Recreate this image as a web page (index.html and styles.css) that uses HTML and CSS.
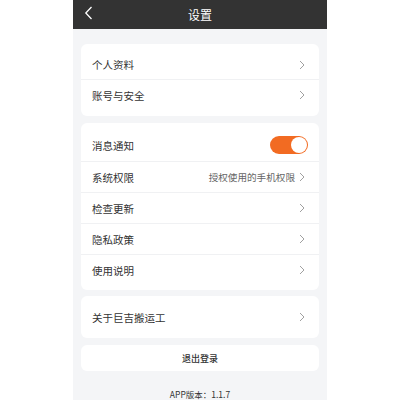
FILE: index.html
```html
<!DOCTYPE html>
<html lang="zh-CN">
<head>
<meta charset="utf-8">
<link rel="stylesheet" href="styles.css">
</head>
<body>
<div class="phone">
  <div class="header">
    <svg class="back" width="9" height="14" viewBox="0 0 9 14"><path d="M7.5 1 L1.8 7 L7.5 13" fill="none" stroke="#fff" stroke-width="1.3"/></svg>
    <div class="title">设置</div>
  </div>
  <div class="content">
    <div class="card">
      <div class="row"><span class="label">个人资料</span><svg class="chev" width="6" height="10" viewBox="0 0 6 10"><path d="M1 1 L5 5 L1 9" fill="none" stroke="#a0a0a0" stroke-width="1"/></svg></div>
      <div class="row"><span class="label">账号与安全</span><svg class="chev" width="6" height="10" viewBox="0 0 6 10"><path d="M1 1 L5 5 L1 9" fill="none" stroke="#a0a0a0" stroke-width="1"/></svg></div>
    </div>
    <div class="card card2">
      <div class="row row-toggle"><span class="label">消息通知</span><span class="toggle"><span class="knob"></span></span></div>
      <div class="row"><span class="label">系统权限</span><span class="right"><span class="value">授权使用的手机权限</span><svg class="chev" width="6" height="10" viewBox="0 0 6 10"><path d="M1 1 L5 5 L1 9" fill="none" stroke="#a0a0a0" stroke-width="1"/></svg></span></div>
      <div class="row"><span class="label">检查更新</span><svg class="chev" width="6" height="10" viewBox="0 0 6 10"><path d="M1 1 L5 5 L1 9" fill="none" stroke="#a0a0a0" stroke-width="1"/></svg></div>
      <div class="row"><span class="label">隐私政策</span><svg class="chev" width="6" height="10" viewBox="0 0 6 10"><path d="M1 1 L5 5 L1 9" fill="none" stroke="#a0a0a0" stroke-width="1"/></svg></div>
      <div class="row"><span class="label">使用说明</span><svg class="chev" width="6" height="10" viewBox="0 0 6 10"><path d="M1 1 L5 5 L1 9" fill="none" stroke="#a0a0a0" stroke-width="1"/></svg></div>
    </div>
    <div class="card">
      <div class="row"><span class="label">关于巨吉搬运工</span><svg class="chev" width="6" height="10" viewBox="0 0 6 10"><path d="M1 1 L5 5 L1 9" fill="none" stroke="#a0a0a0" stroke-width="1"/></svg></div>
    </div>
    <div class="logout">退出登录</div>
    <div class="version">APP版本：1.1.7</div>
  </div>
</div>
</body>
</html>
```
FILE: styles.css
```css
html, body {
  margin: 0;
  padding: 0;
  background: #ffffff;
  font-family: "Noto Sans CJK SC", "Noto Sans", sans-serif;
}
.phone {
  width: 254px;
  height: 400px;
  margin-left: 73px;
  background: #f4f5f7;
  overflow: hidden;
}
.header {
  height: 29px;
  background: #333333;
  display: flex;
  align-items: center;
  justify-content: center;
  position: relative;
}
.back {
  position: absolute;
  left: 11px;
  top: 6px;
}
.title {
  color: #ffffff;
  font-size: 12px;
  line-height: 29px;
}
.content {
  padding: 15px 8px 0;
  display: flex;
  flex-direction: column;
}
.card {
  background: #ffffff;
  border-radius: 6px;
  padding: 6px 0;
  margin-bottom: 7px;
}
.card1 {
  padding-bottom: 5px;
}
.card2 {
  padding-bottom: 5px;
  margin-bottom: 6px;
}
.row {
  height: 30px;
  display: flex;
  align-items: center;
  justify-content: space-between;
  padding: 0 14px 0 11px;
  border-bottom: 1px solid #f0f1f3;
}
.card:first-child .row:first-child {
  height: 29px;
}
.row:last-child {
  border-bottom: none;
}
.row-toggle {
  height: 32px;
  padding-right: 11px;
}
.label {
  font-size: 10.5px;
  color: #333333;
}
.right {
  display: flex;
  align-items: center;
  gap: 4px;
}
.value {
  font-size: 9.6px;
  color: #666666;
}
.chev {
  display: block;
}
.toggle {
  width: 38px;
  height: 18px;
  border-radius: 9px;
  background: #f26b22;
  display: flex;
  align-items: center;
  justify-content: flex-end;
  box-sizing: border-box;
  padding-right: 1px;
}
.knob {
  width: 16px;
  height: 16px;
  border-radius: 50%;
  background: #ffffff;
}
.logout {
  height: 26px;
  background: #ffffff;
  border-radius: 6px;
  display: flex;
  align-items: center;
  justify-content: center;
  font-size: 9px;
  color: #333333;
  font-weight: 500;
}
.version {
  margin-top: 17px;
  text-align: center;
  font-size: 8.5px;
  color: #333333;
}
```
